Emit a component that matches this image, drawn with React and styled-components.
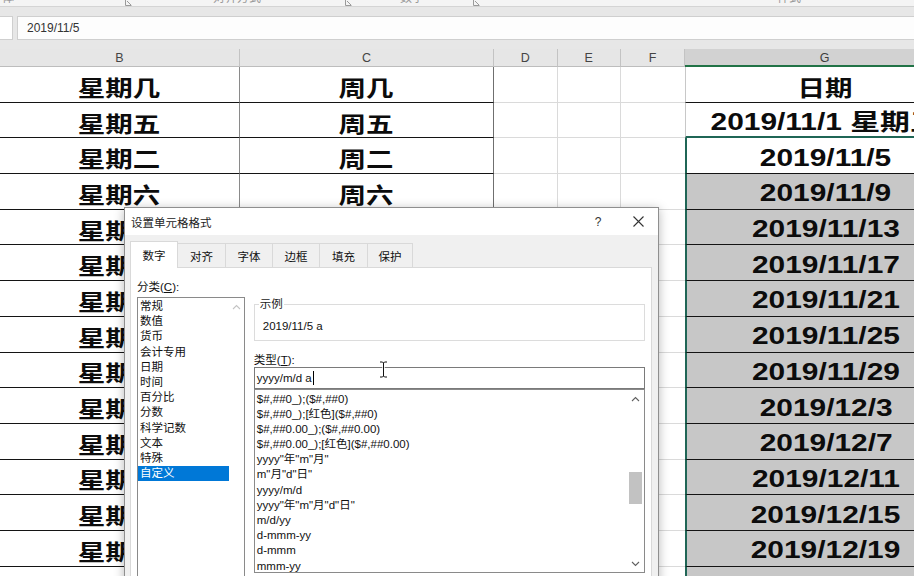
import React from 'react';
import styled, { createGlobalStyle } from 'styled-components';

const GlobalStyle = createGlobalStyle`
  html, body {
    margin: 0;
    padding: 0;
  }
  body {
    width: 914px;
    height: 576px;
    overflow: hidden;
    background: #fff;
    font-family: "Liberation Sans", "Noto Sans CJK SC", sans-serif;
  }
`;

const Screen = styled.div`
  position: relative;
  width: 914px;
  height: 576px;
  overflow: hidden;
  background: #fff;
`;

/* ribbon remains at the very top */
const Ribbon = styled.div`
  height: 6px;
  background: #f4f4f4;
  border-bottom: 1px solid #d4d4d4;
  display: flex;
  align-items: flex-start;
  overflow: hidden;
`;

const RibbonLabel = styled.span`
  flex-shrink: 0;
  margin-left: ${p => p.$gap}px;
  margin-top: -8px;
  font-size: 12px;
  line-height: 12px;
  color: #9a9a9a;
  white-space: nowrap;
`;

const RibbonLauncher = styled.svg`
  flex-shrink: 0;
  margin-left: ${p => p.$gap}px;
`;

/* formula bar */
const FormulaBand = styled.div`
  height: 42px;
  box-sizing: border-box;
  padding-top: 9px;
  background: #e7e7e7;
  display: flex;
  gap: 4px;
`;

const NameBox = styled.div`
  width: 13px;
  height: 24px;
  box-sizing: border-box;
  background: #fff;
  border: 1px solid #cfcfcf;
  border-left: none;
`;

const FormulaInput = styled.div`
  flex: 1;
  height: 24px;
  box-sizing: border-box;
  background: #fdfdfd;
  border: 1px solid #cfcfcf;
  border-right: none;
  padding-left: 9px;
  font-size: 12px;
  line-height: 22px;
  color: #333;
`;

/* worksheet */
const Sheet = styled.div`
  display: grid;
  grid-template-columns: 240px 254px 63.5px 63.5px 64px 280px;
  grid-template-rows: 18px;
  grid-auto-rows: 35.7px;
  width: 965px;
`;

const ColHeader = styled.div`
  box-sizing: border-box;
  display: flex;
  align-items: center;
  justify-content: center;
  background: ${p => (p.$active ? '#d2d2d2' : '#e6e6e6')};
  border-right: 1px solid #c3c3c3;
  border-bottom: ${p => (p.$active ? '2px solid #217346' : '1px solid #bdbdbd')};
  font-size: 12.5px;
  color: ${p => (p.$active ? '#3d3d3d' : '#444')};
  padding-top: 1px;
`;

const TableCell = styled.div`
  box-sizing: border-box;
  display: flex;
  justify-content: center;
  align-items: center;
  padding-top: 3px;
  border-right: 1px solid ${p => p.$edge};
  border-bottom: 1px solid #141414;
  white-space: nowrap;
`;

const GridCell = styled.div`
  box-sizing: border-box;
  border-right: ${p => (p.$last ? 'none' : '1px solid #dadada')};
  border-bottom: 1px solid #dadada;
`;

const DateCell = styled.div`
  box-sizing: border-box;
  display: flex;
  justify-content: center;
  align-items: center;
  padding-top: 4px;
  white-space: nowrap;
  background: ${p => (p.$shaded ? '#c7c7c7' : '#fff')};
  border-left: ${p => (p.$selected ? '2px solid #1f6656' : '1px solid #c8c8c8')};
  border-bottom: ${p => (p.$above ? '2px solid #1f6656' : '1px solid #141414')};
`;

const CjkText = styled.span`
  display: inline-block;
  font-family: "Noto Sans CJK SC", sans-serif;
  font-weight: 700;
  font-size: 22px;
  line-height: 26px;
  color: #0c0c0c;
  transform: scaleX(1.25);
`;

const DateText = styled.span`
  display: inline-block;
  font-family: "Liberation Sans", "Noto Sans CJK SC", sans-serif;
  font-weight: 700;
  font-size: 23px;
  line-height: 26px;
  color: #0c0c0c;
  transform: scaleX(1.3);
`;

/* format cells dialog */
const Dialog = styled.div`
  position: absolute;
  left: 124px;
  top: 207px;
  width: 535px;
  height: 400px;
  box-sizing: border-box;
  display: flex;
  flex-direction: column;
  background: #f0f0f0;
  border: 1px solid #8f8f8f;
  box-shadow: 0 2px 10px rgba(0, 0, 0, 0.28);
  font-family: "Liberation Sans", "Noto Sans CJK SC", sans-serif;
  font-size: 11.5px;
  color: #111;
`;

const TitleBar = styled.div`
  height: 27px;
  flex-shrink: 0;
  display: flex;
  align-items: center;
  gap: 8px;
  padding-left: 6px;
  background: #fff;
`;

const DialogTitle = styled.div`
  flex: 1;
  color: #222;
  padding-top: 1px;
`;

const TitleButton = styled.div`
  width: ${p => p.$w}px;
  height: 27px;
  display: flex;
  align-items: center;
  justify-content: center;
  font-size: 12px;
  color: #333;
`;

const DialogBody = styled.div`
  flex: 1;
  display: flex;
  flex-direction: column;
  padding: 6px 6px 0 5px;
`;

const TabRow = styled.div`
  height: 26px;
  display: flex;
  align-items: flex-end;
  position: relative;
  z-index: 1;
`;

const Tab = styled.div`
  width: ${p => p.$w}px;
  height: ${p => (p.$active ? 27 : 24)}px;
  margin-bottom: ${p => (p.$active ? -1 : 0)}px;
  margin-left: -1px;
  box-sizing: border-box;
  display: flex;
  align-items: center;
  justify-content: center;
  background: ${p => (p.$active ? '#fff' : '#f0f0f0')};
  border: 1px solid #d9d9d9;
  border-bottom: none;
  color: #111;
  &:first-child {
    margin-left: 0;
  }
`;

const TabPanel = styled.div`
  flex: 1;
  display: flex;
  gap: 9px;
  padding: 12px 6px 0 6px;
  background: #fff;
  border: 1px solid #d9d9d9;
`;

const CategoryColumn = styled.div`
  width: 108px;
  display: flex;
  flex-direction: column;
`;

const DetailColumn = styled.div`
  width: 392px;
  display: flex;
  flex-direction: column;
`;

const FieldLabel = styled.div`
  line-height: 14px;
  margin-top: ${p => p.$gap || 0}px;
  margin-bottom: ${p => p.$after || 0}px;
  color: #111;
`;

const Mnemonic = styled.span`
  text-decoration: underline;
`;

const ListBox = styled.div`
  height: ${p => p.$h}px;
  flex-shrink: 0;
  box-sizing: border-box;
  display: flex;
  background: #fff;
  border: 1px solid #8a8a8a;
`;

const ListItems = styled.div`
  flex: 1;
  padding-top: ${p => p.$top || 0}px;
`;

const ListItem = styled.div`
  height: 15.2px;
  line-height: 15.2px;
  padding-left: ${p => p.$indent}px;
  white-space: nowrap;
  background: ${p => (p.$selected ? '#0078d7' : 'transparent')};
  color: ${p => (p.$selected ? '#fff' : '#111')};
`;

const ScrollBar = styled.div`
  width: ${p => p.$w}px;
  display: flex;
  flex-direction: column;
  background: #fff;
`;

const ScrollArrow = styled.div`
  height: 17px;
  display: flex;
  align-items: center;
  justify-content: center;
`;

const ScrollTrack = styled.div`
  flex: 1;
  display: flex;
  justify-content: center;
`;

const ScrollThumb = styled.div`
  width: 13px;
  height: 32px;
  background: #c2c2c2;
`;

const SampleBox = styled.fieldset`
  margin: 17px 0 0 0;
  padding: 7px 8px 6px 8px;
  border: 1px solid #dcdcdc;
  min-width: 0;
`;

const SampleLegend = styled.legend`
  margin-left: -4px;
  padding: 0 1px;
  line-height: 15px;
  color: #222;
`;

const SampleValue = styled.div`
  line-height: 15px;
  color: #111;
`;

const TypeInput = styled.div`
  height: 22px;
  flex-shrink: 0;
  box-sizing: border-box;
  border: 1px solid #7a7a7a;
  padding-left: 2px;
  line-height: 20px;
  color: #111;
  background: #fff;
  white-space: nowrap;
`;

const Caret = styled.span`
  display: inline-block;
  width: 1px;
  height: 14px;
  margin-left: 1px;
  background: #000;
  vertical-align: -3px;
`;

const MouseCursor = styled.svg`
  position: absolute;
  left: 379px;
  top: 361px;
`;

const Chevron = ({ up, color }) => (
  <svg width="9" height="6" viewBox="0 0 9 6">
    <polyline
      points={up ? '1,5 4.5,1.5 8,5' : '1,1 4.5,4.5 8,1'}
      fill="none"
      stroke={color}
      strokeWidth="1.1"
    />
  </svg>
);

const CloseIcon = () => (
  <svg width="11" height="11" viewBox="0 0 11 11">
    <path d="M0.5 0.5 L10.5 10.5 M10.5 0.5 L0.5 10.5" stroke="#333" strokeWidth="1.1" />
  </svg>
);

const Launcher = ({ gap }) => (
  <RibbonLauncher $gap={gap} width="7" height="6" viewBox="0 0 7 6">
    <path d="M0.5 0 V5.5 H6.5 M2 1 L6 5" stroke="#9a9a9a" strokeWidth="1" fill="none" />
  </RibbonLauncher>
);

const weekB = [
  '星期几', '星期五', '星期二', '星期六', '星期三', '星期日', '星期四', '星期一',
  '星期五', '星期二', '星期六', '星期三', '星期日', '星期四', '星期一',
];
const weekC = weekB.map(w => w.replace('星期', '周'));
const dates = [
  '日期', '2019/11/1 星期五', '2019/11/5', '2019/11/9', '2019/11/13', '2019/11/17',
  '2019/11/21', '2019/11/25', '2019/11/29', '2019/12/3', '2019/12/7', '2019/12/11',
  '2019/12/15', '2019/12/19', '2019/12/23',
];
const letters = ['B', 'C', 'D', 'E', 'F', 'G'];

const tabs = [
  { name: '数字', w: 48 },
  { name: '对齐', w: 49 },
  { name: '字体', w: 48 },
  { name: '边框', w: 48 },
  { name: '填充', w: 49 },
  { name: '保护', w: 46 },
];

const categories = [
  '常规', '数值', '货币', '会计专用', '日期', '时间', '百分比', '分数', '科学记数', '文本', '特殊', '自定义',
];

const formats = [
  '$#,##0_);($#,##0)',
  '$#,##0_);[红色]($#,##0)',
  '$#,##0.00_);($#,##0.00)',
  '$#,##0.00_);[红色]($#,##0.00)',
  'yyyy"年"m"月"',
  'm"月"d"日"',
  'yyyy/m/d',
  'yyyy"年"m"月"d"日"',
  'm/d/yy',
  'd-mmm-yy',
  'd-mmm',
  'mmm-yy',
];

export default function App() {
  return (
    <Screen>
      <GlobalStyle />
      <Ribbon>
        <RibbonLabel $gap={-10}>字体</RibbonLabel>
        <Launcher gap={111} />
        <RibbonLabel $gap={81}>对齐方式</RibbonLabel>
        <Launcher gap={84} />
        <RibbonLabel $gap={48}>数字</RibbonLabel>
        <Launcher gap={49} />
        <RibbonLabel $gap={297}>样式</RibbonLabel>
      </Ribbon>

      <FormulaBand>
        <NameBox />
        <FormulaInput>2019/11/5</FormulaInput>
      </FormulaBand>

      <Sheet>
        {letters.map(l => (
          <ColHeader key={l} $active={l === 'G'}>{l}</ColHeader>
        ))}
        {dates.map((d, r) => (
          <React.Fragment key={r}>
            <TableCell $edge="#8a8a8a"><CjkText>{weekB[r]}</CjkText></TableCell>
            <TableCell $edge="#6f6f6f"><CjkText>{weekC[r]}</CjkText></TableCell>
            <GridCell />
            <GridCell />
            <GridCell $last />
            <DateCell $shaded={r >= 3} $selected={r >= 2} $above={r === 1}>
              {r === 0 ? <CjkText>{d}</CjkText> : <DateText>{d}</DateText>}
            </DateCell>
          </React.Fragment>
        ))}
      </Sheet>

      <Dialog>
        <TitleBar>
          <DialogTitle>设置单元格格式</DialogTitle>
          <TitleButton $w={24}>?</TitleButton>
          <TitleButton $w={40}><CloseIcon /></TitleButton>
        </TitleBar>
        <DialogBody>
          <TabRow>
            {tabs.map((t, i) => (
              <Tab key={t.name} $w={t.w} $active={i === 0}>{t.name}</Tab>
            ))}
          </TabRow>
          <TabPanel>
            <CategoryColumn>
              <FieldLabel $after={3}>分类(<Mnemonic>C</Mnemonic>):</FieldLabel>
              <ListBox $h={300}>
                <ListItems $top={1}>
                  {categories.map(c => (
                    <ListItem key={c} $indent={2} $selected={c === '自定义'}>{c}</ListItem>
                  ))}
                </ListItems>
                <ScrollBar $w={15}>
                  <ScrollArrow><Chevron up color="#c4c4c4" /></ScrollArrow>
                </ScrollBar>
              </ListBox>
            </CategoryColumn>

            <DetailColumn>
              <SampleBox>
                <SampleLegend>示例</SampleLegend>
                <SampleValue>2019/11/5 a</SampleValue>
              </SampleBox>
              <FieldLabel $gap={12}>类型(<Mnemonic>T</Mnemonic>):</FieldLabel>
              <TypeInput>yyyy/m/d a<Caret /></TypeInput>
              <ListBox $h={184}>
                <ListItems $top={1.5}>
                  {formats.map(f => (
                    <ListItem key={f} $indent={2}>{f}</ListItem>
                  ))}
                </ListItems>
                <ScrollBar $w={17}>
                  <ScrollArrow><Chevron up color="#606060" /></ScrollArrow>
                  <ScrollTrack>
                    <ScrollThumb style={{ marginTop: 65 }} />
                  </ScrollTrack>
                  <ScrollArrow><Chevron color="#606060" /></ScrollArrow>
                </ScrollBar>
              </ListBox>
            </DetailColumn>
          </TabPanel>
        </DialogBody>
      </Dialog>

      <MouseCursor width="9" height="17" viewBox="0 0 9 17">
        <path
          d="M1 1 H3.5 L4.5 2 L5.5 1 H8 M4.5 2 V15 M1 16 H3.5 L4.5 15 L5.5 16 H8"
          fill="none"
          stroke="#fff"
          strokeWidth="2.4"
        />
        <path
          d="M1 1 H3.5 L4.5 2 L5.5 1 H8 M4.5 2 V15 M1 16 H3.5 L4.5 15 L5.5 16 H8"
          fill="none"
          stroke="#111"
          strokeWidth="1"
        />
      </MouseCursor>
    </Screen>
  );
}
